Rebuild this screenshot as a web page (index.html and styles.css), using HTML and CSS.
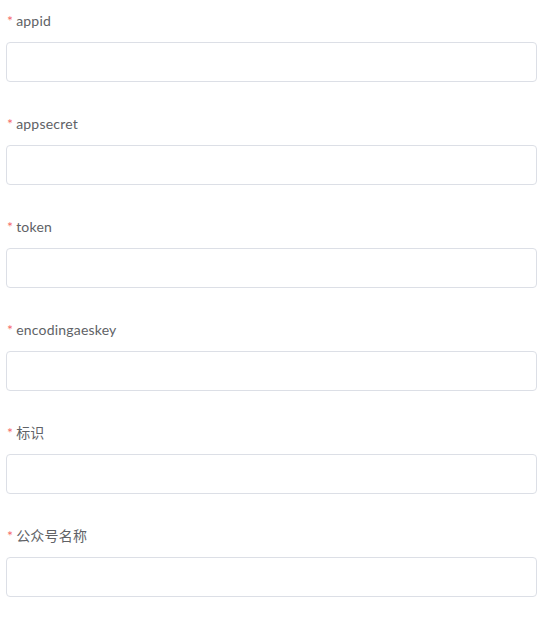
FILE: index.html
```html
<!DOCTYPE html>
<html>
<head>
<meta charset="utf-8">
<link rel="stylesheet" href="styles.css">
</head>
<body>
<form class="form">
  <div class="item"><label class="label"><span class="req">*</span>appid</label><input class="input" type="text"></div>
  <div class="item"><label class="label"><span class="req">*</span>appsecret</label><input class="input" type="text"></div>
  <div class="item"><label class="label"><span class="req">*</span>token</label><input class="input" type="text"></div>
  <div class="item"><label class="label"><span class="req">*</span>encodingaeskey</label><input class="input" type="text"></div>
  <div class="item"><label class="label"><span class="req">*</span>标识</label><input class="input" type="text"></div>
  <div class="item"><label class="label"><span class="req">*</span>公众号名称</label><input class="input" type="text"></div>
</form>
</body>
</html>
```
FILE: styles.css
```css
html, body {
  margin: 0;
  padding: 0;
  background: #fff;
}
.form {
  padding: 0 6px;
  font-family: Lato, "Noto Sans CJK SC", sans-serif;
}
.item {
  display: flex;
  flex-direction: column;
  margin-bottom: 21px;
}
.label {
  display: block;
  margin-top: 10px;
  margin-bottom: 10px;
  line-height: 22px;
  font-size: 14px;
  color: #606266;
  letter-spacing: 0.2px;
}
.req {
  color: #f56c6c;
  margin-right: 3px;
  margin-left: 1px;
}
.input {
  box-sizing: border-box;
  height: 40px;
  width: 100%;
  margin: 0;
  border: 1px solid #dcdfe6;
  border-radius: 4px;
  background: #fff;
  outline: none;
  padding: 0 15px;
  font-size: 14px;
}
```
